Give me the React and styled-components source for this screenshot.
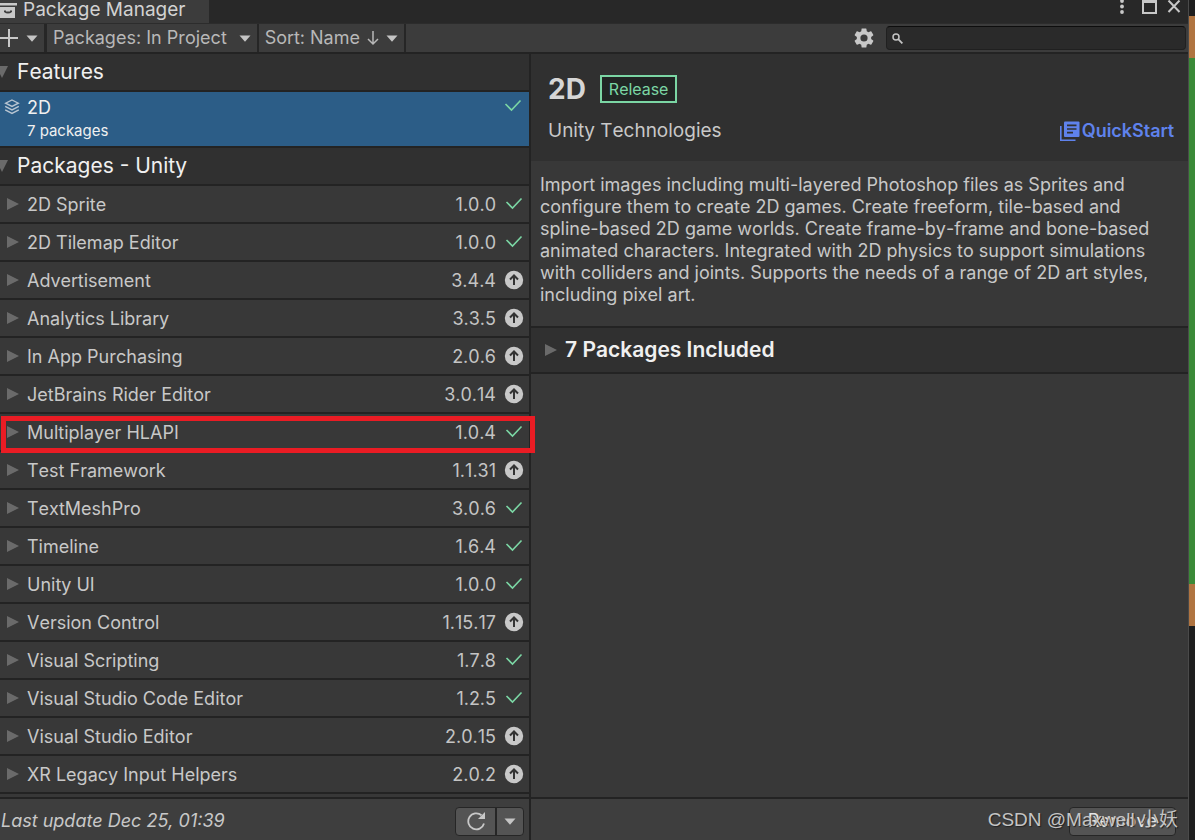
import React from "react";
import styled, { createGlobalStyle, css } from "styled-components";

const GlobalStyle = createGlobalStyle`
  * {
    box-sizing: border-box;
  }

  body {
    margin: 0;
    background: #1e1e1e;
    color: #c8c8c8;
    font-family: Inter, "Noto Sans CJK SC", sans-serif;
    font-size: 18px;
    font-kerning: none;
    line-height: 22px;
  }

  button,
  input {
    font: inherit;
    font-kerning: none;
    color: inherit;
  }

  h1,
  h2,
  p,
  ul {
    margin: 0;
    padding: 0;
  }
`;

const Screen = styled.div`
  display: flex;
  min-height: 100vh;
`;

const Window = styled.main`
  flex: 1;
  min-width: 0;
  display: flex;
  flex-direction: column;
  background: #383838;
  border-right: 1px solid #4a4a4a;
`;

const SceneStrip = styled.div`
  width: 6px;
  display: flex;
  flex-direction: column;
`;

const StripPart = styled.div`
  flex: ${(props) => props.$size} 0 0;
  background: ${(props) => props.$color};
`;

const TitleBar = styled.header`
  height: 23px;
  display: flex;
  justify-content: space-between;
  background: #282828;
`;

const Tab = styled.h1`
  width: 209px;
  display: flex;
  align-items: center;
  gap: 6px;
  padding-bottom: 3px;
  background: #3c3c3c;
  color: #d2d2d2;
  font-size: 19px;
  font-weight: 400;
  line-height: 20px;
`;

const WindowButtons = styled.div`
  display: flex;
  align-items: flex-start;
  gap: 5px;
  padding-right: 5px;
`;

const IconButton = styled.button`
  display: flex;
  align-items: center;
  justify-content: center;
  padding: 0;
  border: 0;
  background: none;
  color: #c8c8c8;
`;

const Toolbar = styled.div`
  height: 31px;
  display: flex;
  align-items: center;
  background: #3c3c3c;
  border-top: 1px solid #2c2c2c;
  border-bottom: 2px solid #232323;
`;

const ToolButton = styled.button`
  align-self: stretch;
  display: flex;
  align-items: center;
  gap: ${(props) => props.$gap || 6}px;
  padding: 0 6px;
  border: 0;
  border-right: 2px solid #262626;
  background: none;
  color: #b8b8b8;
  white-space: nowrap;

  &:first-child {
    padding-left: 0;
    border-right-width: 3px;
  }
`;

const SettingsButton = styled(IconButton)`
  margin-left: auto;
`;

const SearchBox = styled.label`
  width: 300px;
  height: 24px;
  display: flex;
  align-items: center;
  gap: 6px;
  margin: 0 2px 0 12px;
  padding: 0 5px;
  background: #2a2a2a;
  border: 1px solid #202020;
  border-top-color: #0d0d0d;
  border-radius: 4px;
`;

const SearchInput = styled.input`
  flex: 1;
  min-width: 0;
  padding: 0;
  border: 0;
  outline: 0;
  background: none;
`;

const Columns = styled.div`
  flex: 1;
  display: grid;
  grid-template-columns: minmax(0, 531fr) minmax(0, 657fr);
`;

const Sidebar = styled.section`
  display: flex;
  flex-direction: column;
  border-right: 2px solid #232323;
`;

const GroupHeader = styled.h2`
  height: 38px;
  display: flex;
  align-items: center;
  gap: 9px;
  background: #303030;
  border-bottom: 2px solid #232323;
  color: #f0f0f0;
  font-size: 21px;
  font-weight: 400;
`;

const List = styled.ul`
  list-style: none;
`;

const Feature = styled.li`
  height: 56px;
  display: flex;
  align-items: flex-start;
  padding: 5px 7px 0 4px;
  background: #2c5d87;
  border-bottom: 2px solid #232323;
  color: #f0f0f0;

  > svg {
    margin-top: 2px;
  }
`;

const FeatureText = styled.div`
  flex: 1;
  margin-left: 7px;
`;

const FeatureCount = styled.p`
  margin-top: 1px;
  font-size: 15px;
`;

const Row = styled.li`
  position: relative;
  height: 38px;
  display: flex;
  align-items: center;
  gap: 8px;
  padding: 0 5px 0 7px;
  border-bottom: 2px solid #232323;

  ${(props) =>
    props.$marked &&
    css`
      &::after {
        content: "";
        position: absolute;
        z-index: 1;
        inset: 2px -6px -3px 1px;
        border: 5px solid #ea1c24;
      }
    `}
`;

const Name = styled.span`
  flex: 1;
  padding-top: 2px;
`;

const Version = styled.span`
  padding-top: 2px;
  color: #c4c4c4;
`;

const Status = styled.span`
  width: 20px;
  display: flex;
  justify-content: center;
`;

const Details = styled.section`
  display: flex;
  flex-direction: column;
`;

const DetailsHeader = styled.div`
  height: 107px;
  padding: 18px 14px 0 17px;
  background: #303030;
`;

const TitleLine = styled.div`
  display: flex;
  align-items: center;
  gap: 14px;
`;

const Title = styled.h2`
  color: #d6d6d6;
  font-size: 28px;
  font-weight: 700;
  line-height: 34px;
`;

const Tag = styled.span`
  padding: 1px 7px;
  border: 2px solid #7bd6a4;
  background: #212524;
  color: #7bd6a4;
  font-size: 16px;
`;

const AuthorLine = styled.div`
  display: flex;
  justify-content: space-between;
  align-items: center;
  margin-top: 14px;
`;

const Author = styled.span`
  font-size: 19px;
`;

const QuickStart = styled.a`
  display: flex;
  align-items: center;
  gap: 2px;
  color: #5f82ec;
  font-weight: 600;
  text-decoration: none;
`;

const Description = styled.p`
  min-height: 165px;
  padding: 13px 24px 0 9px;
`;

const Included = styled.button`
  height: 48px;
  display: flex;
  align-items: center;
  gap: 8px;
  padding: 0 14px;
  border: solid #232323;
  border-width: 2px 0;
  background: #303030;
  color: #f0f0f0;
  font-size: 21px;
  font-weight: 600;
`;

const Footer = styled.footer`
  height: 43px;
  display: flex;
  align-items: center;
  justify-content: space-between;
  margin-top: auto;
  padding: 3px 5px 0 1px;
  background: #3e3e3e;
  border-top: 2px solid #232323;
`;

const SplitButton = styled.div`
  height: 29px;
  display: flex;
  border: 1px solid #262626;
  border-radius: 4px;
  background: #545454;
`;

const SplitPart = styled(IconButton)`
  width: ${(props) => props.$width}px;

  & + & {
    border-left: 2px solid #262626;
  }
`;

const Actions = styled(Footer)`
  position: relative;
  justify-content: flex-end;
  padding-right: 12px;
`;

const RemoveButton = styled.button`
  height: 29px;
  padding: 0 18px;
  border: 1px solid #262626;
  border-radius: 4px;
  background: #545454;
  color: #e4e4e4;
`;

const Watermark = styled.span`
  position: absolute;
  right: 10px;
  top: 10px;
  color: #c4c4c4;
  font-family: "Liberation Sans", "Noto Sans CJK SC", sans-serif;
  font-size: 19px;
  text-shadow: 1px 1px 1px #222;
  white-space: nowrap;
`;

const packages = [
  ["2D Sprite", "1.0.0", "ok"],
  ["2D Tilemap Editor", "1.0.0", "ok"],
  ["Advertisement", "3.4.4", "update"],
  ["Analytics Library", "3.3.5", "update"],
  ["In App Purchasing", "2.0.6", "update"],
  ["JetBrains Rider Editor", "3.0.14", "update"],
  ["Multiplayer HLAPI", "1.0.4", "ok"],
  ["Test Framework", "1.1.31", "update"],
  ["TextMeshPro", "3.0.6", "ok"],
  ["Timeline", "1.6.4", "ok"],
  ["Unity UI", "1.0.0", "ok"],
  ["Version Control", "1.15.17", "update"],
  ["Visual Scripting", "1.7.8", "ok"],
  ["Visual Studio Code Editor", "1.2.5", "ok"],
  ["Visual Studio Editor", "2.0.15", "update"],
  ["XR Legacy Input Helpers", "2.0.2", "update"],
];

const Caret = () => (
  <svg width="12" height="7" viewBox="0 0 12 7" fill="#c4c4c4">
    <path d="M0.5 0.5h11L6 6.8z" />
  </svg>
);

const Closed = () => (
  <svg width="12" height="14" viewBox="0 0 12 14" fill="#6a6a6a">
    <path d="M0 1v12l12-6z" />
  </svg>
);

const Opened = () => (
  <svg width="8" height="12" viewBox="0 0 8 12" fill="#6a6a6a">
    <path d="M-4 0H8L2 12z" />
  </svg>
);

const Check = () => (
  <svg width="18" height="14" viewBox="0 0 18 14" fill="none">
    <path d="M1.5 5l6 6 9-9.5" stroke="#7bd6a4" strokeWidth="1.6" />
  </svg>
);

const Update = () => (
  <svg width="20" height="20" viewBox="0 0 20 20">
    <circle cx="10" cy="10" r="9.2" fill="#c8c8c8" />
    <path
      d="M10 15V6M6 9.5l4-4 4 4"
      fill="none"
      stroke="#333"
      strokeWidth="2"
    />
  </svg>
);

const PackageIcon = () => (
  <svg width="17" height="17" viewBox="0 0 17 17" fill="#c8c8c8">
    <path d="M0 1h17v2.5H0z" />
    <path
      fillRule="evenodd"
      d="M0 5h15v11H0zM4 8.5v1.5q4 3 8 0V8.5h-2v1H6v-1z"
    />
  </svg>
);

const Layers = () => (
  <svg
    width="16"
    height="16"
    viewBox="0 0 16 16"
    fill="none"
    stroke="#b9c6d2"
    strokeWidth="1.4"
  >
    <path d="M8 1l6.3 3.2L8 7.4 1.7 4.2z" />
    <path d="M1.2 7.4L8 10.9l6.8-3.5M1.2 10.9L8 14.4l6.8-3.5" />
  </svg>
);

const Book = () => (
  <svg width="21" height="21" viewBox="0 0 21 21">
    <path d="M1.8 5v14.2H16.5" fill="none" stroke="#5f82ec" strokeWidth="1.6" />
    <rect x="5" y="0.5" width="15.5" height="15.5" rx="1" fill="#5f82ec" />
    <path
      d="M8 4.4h9.5M8 8h9.5M8 11.6h6"
      stroke="#303030"
      strokeWidth="1.6"
    />
  </svg>
);

const Gear = () => (
  <svg width="20" height="20" viewBox="2 2 20 20" fill="#c8c8c8">
    <path d="M19.14 12.94c.04-.3.06-.61.06-.94 0-.32-.02-.64-.07-.94l2.03-1.58a.49.49 0 0 0 .12-.61l-1.92-3.32a.488.488 0 0 0-.59-.22l-2.39.96c-.5-.38-1.03-.7-1.62-.94l-.36-2.54a.484.484 0 0 0-.48-.41h-3.84c-.24 0-.43.17-.47.41l-.36 2.54c-.59.24-1.13.57-1.62.94l-2.39-.96c-.22-.08-.47 0-.59.22L2.74 8.87c-.12.21-.08.47.12.61l2.03 1.58c-.05.3-.09.63-.09.94s.02.64.07.94l-2.03 1.58a.49.49 0 0 0-.12.61l1.92 3.32c.12.22.37.29.59.22l2.39-.96c.5.38 1.03.7 1.62.94l.36 2.54c.05.24.24.41.48.41h3.84c.24 0 .44-.17.47-.41l.36-2.54c.59-.24 1.13-.56 1.62-.94l2.39.96c.22.08.47 0 .59-.22l1.92-3.32c.12-.22.07-.47-.12-.61zM12 15.6A3.6 3.6 0 1 1 12 8.4a3.6 3.6 0 0 1 0 7.2z" />
  </svg>
);

const Magnifier = () => (
  <svg
    width="11"
    height="11"
    viewBox="0 0 11 11"
    fill="none"
    stroke="#c4c4c4"
    strokeWidth="1.5"
  >
    <circle cx="4" cy="4" r="3" />
    <path d="M6.2 6.2l4.2 4.2" strokeWidth="1.8" />
  </svg>
);

export default function App() {
  return (
    <>
      <GlobalStyle />
      <Screen>
        <Window>
          <TitleBar>
            <Tab>
              <PackageIcon />
              Package Manager
            </Tab>
            <WindowButtons>
              <IconButton aria-label="More">
                <svg width="16" height="14" viewBox="0 0 16 14" fill="#c8c8c8">
                  <circle cx="6" cy="1" r="1.9" />
                  <circle cx="6" cy="6.5" r="1.9" />
                  <circle cx="6" cy="12" r="1.9" />
                </svg>
              </IconButton>
              <IconButton aria-label="Maximize">
                <svg width="23" height="14" viewBox="0 0 23 14">
                  <path
                    d="M6 0v13h13V0"
                    fill="none"
                    stroke="#c8c8c8"
                    strokeWidth="2"
                  />
                  <path d="M5 0h15v3H5z" fill="#c8c8c8" />
                </svg>
              </IconButton>
              <IconButton aria-label="Close">
                <svg width="18" height="14" viewBox="0 0 18 14">
                  <path
                    d="M3.5 0.5l11 11.5M14.5 0.5l-11 11.5"
                    stroke="#c8c8c8"
                    strokeWidth="2"
                  />
                </svg>
              </IconButton>
            </WindowButtons>
          </TitleBar>
          <Toolbar>
            <ToolButton aria-label="Add package" $gap={8}>
              <svg width="18" height="18" viewBox="0 0 18 18">
                <path d="M0 9h18M9 0v18" stroke="#c8c8c8" strokeWidth="2" />
              </svg>
              <Caret />
            </ToolButton>
            <ToolButton $gap={12}>
              Packages: In Project
              <Caret />
            </ToolButton>
            <ToolButton>
              Sort: Name
              <svg width="14" height="16" viewBox="0 0 14 16" fill="none">
                <path
                  d="M7 1v13M2 9l5 5 5-5"
                  stroke="#b8b8b8"
                  strokeWidth="1.5"
                />
              </svg>
              <Caret />
            </ToolButton>
            <SettingsButton aria-label="Settings">
              <Gear />
            </SettingsButton>
            <SearchBox>
              <Magnifier />
              <SearchInput aria-label="Search packages" />
            </SearchBox>
          </Toolbar>
          <Columns>
            <Sidebar>
              <GroupHeader>
                <Opened />
                Features
              </GroupHeader>
              <List>
                <Feature>
                  <Layers />
                  <FeatureText>
                    2D
                    <FeatureCount>7 packages</FeatureCount>
                  </FeatureText>
                  <Check />
                </Feature>
              </List>
              <GroupHeader>
                <Opened />
                Packages - Unity
              </GroupHeader>
              <List>
                {packages.map(([name, version, status]) => (
                  <Row key={name} $marked={name === "Multiplayer HLAPI"}>
                    <Closed />
                    <Name>{name}</Name>
                    <Version>{version}</Version>
                    <Status>{status === "ok" ? <Check /> : <Update />}</Status>
                  </Row>
                ))}
              </List>
              <Footer>
                <em>Last update Dec 25, 01:39</em>
                <SplitButton>
                  <SplitPart $width={39} aria-label="Refresh">
                    <svg width="20" height="20" viewBox="0 0 20 20">
                      <path
                        d="M18 12.5A8 8 0 1 1 15.5 4.3"
                        fill="none"
                        stroke="#c8c8c8"
                        strokeWidth="1.8"
                      />
                      <path d="M19 1v7h-7z" fill="#c8c8c8" />
                    </svg>
                  </SplitPart>
                  <SplitPart $width={28} aria-label="Refresh options">
                    <Caret />
                  </SplitPart>
                </SplitButton>
              </Footer>
            </Sidebar>
            <Details>
              <DetailsHeader>
                <TitleLine>
                  <Title>2D</Title>
                  <Tag>Release</Tag>
                </TitleLine>
                <AuthorLine>
                  <Author>Unity Technologies</Author>
                  <QuickStart href="#quickstart">
                    <Book />
                    QuickStart
                  </QuickStart>
                </AuthorLine>
              </DetailsHeader>
              <Description>
                Import images including multi-layered Photoshop files as Sprites
                and configure them to create 2D games. Create freeform,
                tile-based and spline-based 2D game worlds. Create
                frame-by-frame and bone-based animated characters. Integrated
                with 2D physics to support simulations with colliders and
                joints. Supports the needs of a range of 2D art styles,
                including pixel art.
              </Description>
              <Included>
                <Closed />7 Packages Included
              </Included>
              <Actions>
                <RemoveButton>Remove</RemoveButton>
                <Watermark>CSDN @Maxwell 小妖</Watermark>
              </Actions>
            </Details>
          </Columns>
        </Window>
        <SceneStrip>
          <StripPart $size={16} $color="#1e1e1e" />
          <StripPart $size={42} $color="#b07440" />
          <StripPart $size={526} $color="#3b8a38" />
          <StripPart $size={42} $color="#b07440" />
          <StripPart $size={214} $color="#1e1e1e" />
        </SceneStrip>
      </Screen>
    </>
  );
}
